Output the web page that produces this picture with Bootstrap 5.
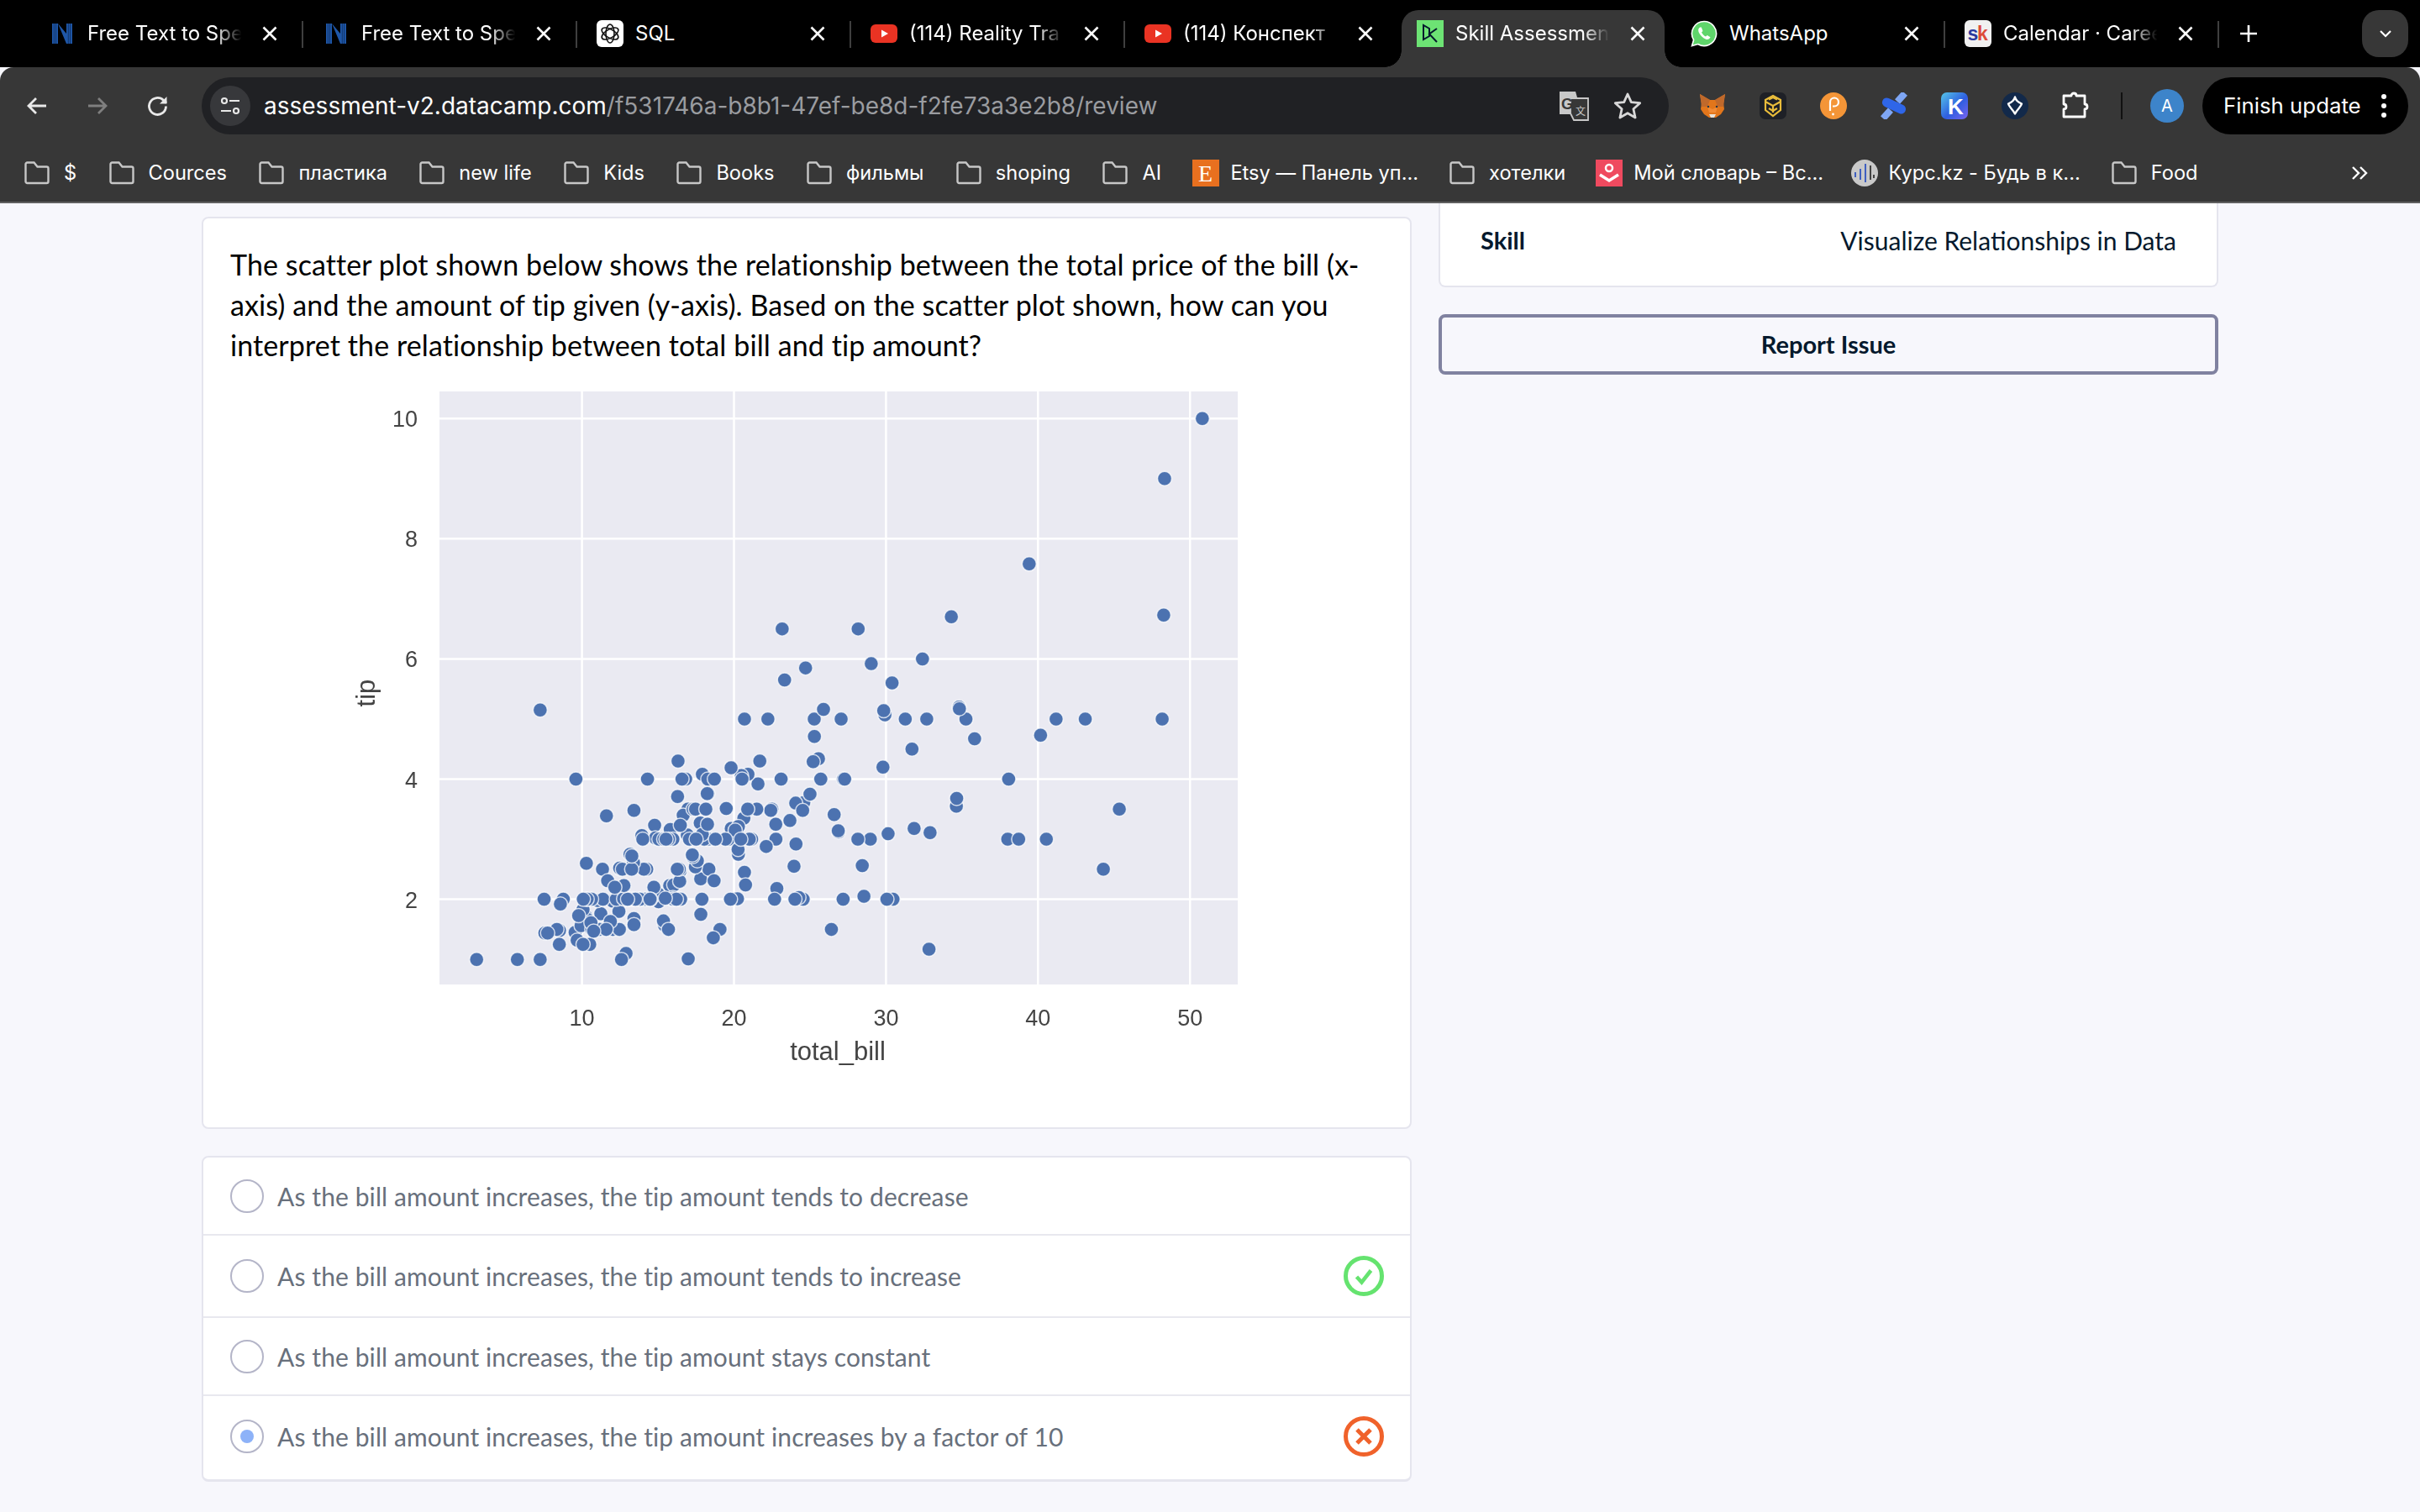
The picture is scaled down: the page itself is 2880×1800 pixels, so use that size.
<!DOCTYPE html>
<html lang="en">
<head>
    <meta charset="UTF-8">
    <title>Skill Assessment</title>
    <link href="https://cdn.jsdelivr.net/npm/bootstrap@5.3.0/dist/css/bootstrap.min.css" rel="stylesheet">
    <style>
        html, body { height: 1800px; overflow: hidden; }
        body { background: #f7f7fc; font-family: "Lato", "Liberation Sans", sans-serif; color: #05192d; }

        /* browser chrome */
        .chrome { font-family: "Inter", "Noto Sans", "Liberation Sans", sans-serif; color: #fff; }
        .strip { height: 80px; background: #000; padding-left: 35px; }
        .tab-item { width: 324px; height: 68px; margin-top: 12px; padding: 0 24px 12px 23px; font-size: 24px; }
        .tab-on { width: 313px; margin-left: 5px; margin-right: 8px; padding-left: 18px; padding-right: 18px; background: #373737; border-radius: 20px 20px 0 0; position: relative; }
        .tab-on::before, .tab-on::after { content: ""; position: absolute; bottom: 0; width: 20px; height: 20px; }
        .tab-on::before { left: -20px; background: radial-gradient(circle at 0 0, #000 19.5px, #373737 20px); }
        .tab-on::after { right: -20px; background: radial-gradient(circle at 100% 0, #000 19.5px, #373737 20px); }
        .fav { width: 32px; height: 32px; flex: none; display: block; }
        .tab-title { flex: 1 1 0; min-width: 0; margin: 0 8px 0 14px; white-space: nowrap; -webkit-mask-image: linear-gradient(90deg, #000 78%, transparent 94%); mask-image: linear-gradient(90deg, #000 78%, transparent 94%); }
        .tab-title-full { -webkit-mask-image: none; mask-image: none; }
        .tab-x { width: 28px; height: 28px; flex: none; }
        .tab-sep { width: 2px; height: 32px; margin-top: 25px; background: #3f3f3f; flex: none; }
        .tab-plus { width: 28px; height: 28px; margin-left: 21px; margin-top: 26px; flex: none; }
        .tab-menu { width: 55px; height: 56px; margin-top: 12px; margin-left: auto; margin-right: 14px; border-radius: 20px; background: #373737; }

        .toolbar { height: 92px; background: #373737; padding-left: 8px; border-radius: 16px 16px 0 0; }
        .tool-btn { width: 72px; height: 68px; flex: none; }
        .url-pill { width: 1746px; height: 68px; margin-left: 16px; margin-right: 16px; background: #202124; border-radius: 34px; padding-left: 10px; padding-right: 31px; }
        .site-info { width: 48px; height: 48px; border-radius: 50%; background: #37383b; flex: none; margin-right: 16px; }
        .url-text { font-size: 28px; color: #fff; white-space: nowrap; flex: 1 1 0; }
        .url-text span { color: #9a9ca0; }
        .translate-ic { margin-right: 28px; }
        .ext-sep { width: 2px; height: 32px; background: #111; margin: 0 51px 0 18px; flex: none; }
        .avatar { width: 40px; height: 40px; border-radius: 50%; background: #3d84ca; font-size: 20px; flex: none; margin-left: -18px; margin-right: 22px; }
        .finish-pill { width: 245px; height: 68px; background: #000; border-radius: 34px; padding-left: 25px; font-size: 25.8px; flex: none; white-space: nowrap; }
        .dots { width: 8px; margin-left: 23px; }

        .bookbar { height: 68px; background: #373737; padding-left: 28px; font-size: 23.6px; }
        .book-item { margin-right: 36px; white-space: nowrap; flex: none; }
        .book-item:nth-child(-n+9) { margin-right: 37.4px; }
        .book-item svg { margin-right: 16px; }
        .book-item.book-tight svg { margin-right: 13px; }
        .book-item.book-short { margin-right: 32.5px; }
        .book-more { margin-left: auto; margin-right: 60px; }
        .chrome-line { height: 2px; background: #606060; }

        /* page */
        .page-wrap { padding: 16px 240px 0; gap: 32px; }
        .left-col { width: 1440px; flex: none; }
        .right-col { width: 928px; flex: none; margin-top: -16px; }
        .panel { background: #fff; border: 2px solid #e5e5ee; border-radius: 8px; }
        .question-panel { height: 1086px; padding: 32px 32px 0 32px; }
        .question-text { font-size: 34px; line-height: 48px; color: #000; margin: -1px 0 0; letter-spacing: .1px; }
        .chart-svg { display: block; margin-top: 17px; filter: blur(.6px); }
        .chart-svg text { font-family: "Liberation Sans", Arial, sans-serif; fill: #444; }

        .options-panel { margin-top: 32px; border-bottom-width: 3px; }
        .option-row { min-height: 93px; padding: 24px 30px 24px 32px; border-bottom: 2px solid #e8e8ef; }
        .option-row:last-child { border-bottom: 0; padding-bottom: 27px; }
        .radio-ring { width: 40px; height: 40px; border: 2px solid #b4b5c8; border-radius: 50%; flex: none; margin-right: 16px; background: #fff; }
        .radio-dot { width: 16px; height: 16px; border-radius: 50%; background: #8db2f8; }
        .option-text { font-size: 30px; line-height: 38px; color: #68707c; flex: 1 1 0; letter-spacing: .1px; }
        .result-ic { width: 48px; height: 48px; flex: none; margin-right: 1px; }

        .skill-panel { height: 100px; border-top: 0; border-radius: 0 0 8px 8px; padding: 0 48px 10px 48px; font-size: 29px; }
        .skill-label { font-weight: 700; }
        .skill-value { font-size: 30px; }
        .report-btn { display: block; width: 100%; height: 72px; margin-top: 32px; background: transparent; border: 4px solid #8082a0; border-radius: 8px; font-size: 29px; font-weight: 700; color: #05192d; }
    </style>
</head>
<body>
    <svg width="0" height="0" class="position-absolute">
        <symbol id="ic-x" viewBox="0 0 28 28"><path d="M6.5 6.5l15 15M21.5 6.5l-15 15" stroke="#fff" stroke-width="2.6" fill="none"/></symbol>
        <symbol id="ic-n" viewBox="0 0 32 32">
            <path d="M4 4h7v24H4zM28 4h-7v24h7zM11 4l10 24V16L11 4z" fill="#1f57a8"/>
            <path d="M6.300 4v24M8.600 4v24M23.300 4v24M25.600 4v24" stroke="#0c2c5a" stroke-width=".8"/>
        </symbol>
        <symbol id="ic-yt" viewBox="0 0 32 32">
            <rect x="0" y="5" width="32" height="22" rx="6" fill="#ea3323"/>
            <path d="M13 11.500l8 4.500-8 4.500z" fill="#fff"/>
        </symbol>
        <symbol id="ic-folder" viewBox="0 0 32 32">
            <path d="M2.500 27V6.500a2 2 0 0 1 2-2h8l4 5h11a2 2 0 0 1 2 2V27a2 2 0 0 1-2 2h-23a2 2 0 0 1-2-2z" transform="translate(0 -1)" fill="none" stroke="#c7c7c7" stroke-width="2.400"/>
        </symbol>
    </svg>

    <div class="chrome">
        <div class="strip d-flex align-items-start">
            <div class="tab-item d-flex align-items-center"><svg class="fav"><use href="#ic-n"/></svg><span class="tab-title">Free Text to Spe</span><svg class="tab-x"><use href="#ic-x"/></svg></div>
            <div class="tab-sep"></div>
            <div class="tab-item d-flex align-items-center"><svg class="fav"><use href="#ic-n"/></svg><span class="tab-title">Free Text to Spe</span><svg class="tab-x"><use href="#ic-x"/></svg></div>
            <div class="tab-sep"></div>
            <div class="tab-item d-flex align-items-center">
                <svg class="fav" viewBox="0 0 32 32"><rect width="32" height="32" rx="6" fill="#fff"/><g fill="none" stroke="#111" stroke-width="1.600"><ellipse cx="16" cy="16" rx="5" ry="11"/><ellipse cx="16" cy="16" rx="5" ry="11" transform="rotate(60 16 16)"/><ellipse cx="16" cy="16" rx="5" ry="11" transform="rotate(120 16 16)"/></g></svg>
                <span class="tab-title tab-title-full">SQL</span><svg class="tab-x"><use href="#ic-x"/></svg>
            </div>
            <div class="tab-sep"></div>
            <div class="tab-item d-flex align-items-center"><svg class="fav"><use href="#ic-yt"/></svg><span class="tab-title">(114) Reality Tra</span><svg class="tab-x"><use href="#ic-x"/></svg></div>
            <div class="tab-sep"></div>
            <div class="tab-item d-flex align-items-center"><svg class="fav"><use href="#ic-yt"/></svg><span class="tab-title">(114) Конспект</span><svg class="tab-x"><use href="#ic-x"/></svg></div>
            <div class="tab-item tab-on d-flex align-items-center">
                <svg class="fav" viewBox="0 0 32 32"><rect width="32" height="32" fill="#6de374"/><path d="M8 6v17l7-4V10zM24 10L15 16.500 24 26" fill="none" stroke="#05192d" stroke-width="2"/></svg>
                <span class="tab-title">Skill Assessmen</span><svg class="tab-x"><use href="#ic-x"/></svg>
            </div>
            <div class="tab-item d-flex align-items-center">
                <svg class="fav" viewBox="0 0 32 32"><path d="M16 1.500A14.500 14.500 0 0 0 3.600 23.500L1.500 30.500l7.200-2A14.500 14.500 0 1 0 16 1.500z" fill="#5fd56b" stroke="#fff" stroke-width="1.600"/><path d="M11 8.500c-2 1.500-2.500 4-.8 7 1.800 3.200 4.500 6 8 7.200 2.500.8 4.500-.5 5.300-2.500l-3.800-2.200-1.700 1.600c-2-.8-4-3-5-5l1.500-1.700L12.800 8.500z" fill="#fff"/></svg>
                <span class="tab-title tab-title-full">WhatsApp</span><svg class="tab-x"><use href="#ic-x"/></svg>
            </div>
            <div class="tab-sep"></div>
            <div class="tab-item d-flex align-items-center">
                <svg class="fav" viewBox="0 0 32 32"><rect width="32" height="32" rx="6" fill="#f1f1f1"/><text x="3.500" y="24" font-family="Liberation Sans, sans-serif" font-weight="700" font-size="23" fill="#2b3a9e">s</text><text x="15" y="24" font-family="Liberation Sans, sans-serif" font-weight="700" font-size="23" fill="#dd4b39">k</text></svg>
                <span class="tab-title">Calendar · Caree</span><svg class="tab-x"><use href="#ic-x"/></svg>
            </div>
            <div class="tab-sep"></div>
            <svg class="tab-plus" viewBox="0 0 28 28"><path d="M14 4v20M4 14h20" stroke="#fff" stroke-width="2.600"/></svg>
            <div class="tab-menu d-flex align-items-center justify-content-center">
                <svg width="20" height="20" viewBox="0 0 20 20"><path d="M4 7l6 6 6-6" fill="none" stroke="#fff" stroke-width="2.200"/></svg>
            </div>
        </div>

        <div class="toolbar d-flex align-items-center">
            <div class="tool-btn d-flex align-items-center justify-content-center">
                <svg width="30" height="30" viewBox="0 0 30 30"><path d="M26 15H5M14 6l-9 9 9 9" fill="none" stroke="#e8e8e8" stroke-width="2.800"/></svg>
            </div>
            <div class="tool-btn d-flex align-items-center justify-content-center">
                <svg width="30" height="30" viewBox="0 0 30 30"><path d="M4 15h21M16 6l9 9-9 9" fill="none" stroke="#7f7f7f" stroke-width="2.800"/></svg>
            </div>
            <div class="tool-btn d-flex align-items-center justify-content-center">
                <svg width="30" height="30" viewBox="0 0 30 30"><path d="M24.500 15.500a10 10 0 1 1-3-7.200L25 11.500" fill="none" stroke="#e8e8e8" stroke-width="2.800"/><path d="M25.500 4v8.500H17z" fill="#e8e8e8"/></svg>
            </div>
            <div class="url-pill d-flex align-items-center">
                <div class="site-info d-flex align-items-center justify-content-center">
                    <svg width="28" height="28" viewBox="0 0 28 28"><g fill="none" stroke="#e8e8e8" stroke-width="2.200"><circle cx="7" cy="8" r="3"/><path d="M13 8h12M3 20h12"/><circle cx="21" cy="20" r="3"/></g></svg>
                </div>
                <div class="url-text">assessment-v2.datacamp.com<span>/f531746a-b8b1-47ef-be8d-f2fe73a3e2b8/review</span></div>
                <svg class="translate-ic" width="36" height="36" viewBox="0 0 36 36"><path d="M1 1h19l2 7v20H1z" fill="#c8c8c8"/><path d="M14 9h21v26H18l-4-8z" fill="#373737" stroke="#c8c8c8" stroke-width="1.800"/><text x="3" y="22" font-family="Liberation Sans, sans-serif" font-weight="700" font-size="18" fill="#373737">G</text><text x="20" y="29" font-family="Noto Sans CJK SC, sans-serif" font-size="12" fill="#c8c8c8">文</text></svg>
                <svg width="36" height="36" viewBox="0 0 36 36"><path d="M18 4l4.300 9.600 10.400 1.100-7.800 7 2.200 10.300L18 26.700 8.900 32l2.200-10.300-7.800-7 10.400-1.100z" fill="none" stroke="#d8d8d8" stroke-width="2.800" stroke-linejoin="round"/></svg>
            </div>
            <div class="tool-btn d-flex align-items-center justify-content-center">
                <svg width="32" height="32" viewBox="0 0 32 32"><path d="M1 2l12 7h6l12-7-2 11 1 7-4 6-6 4h-8l-6-4-4-6 1-7z" fill="#e2761b"/><path d="M1 2l12 7-3 8H3zM31 2L19 9l3 8h7z" fill="#c0692b"/><path d="M10 17l6 3 6-3-2 7h-8z" fill="#f08a35"/><path d="M12 26h8l-2 4h-4z" fill="#e8e2da"/><circle cx="11" cy="17" r="1.200" fill="#233447"/><circle cx="21" cy="17" r="1.200" fill="#233447"/></svg>
            </div>
            <div class="tool-btn d-flex align-items-center justify-content-center">
                <svg width="32" height="32" viewBox="0 0 32 32"><rect width="32" height="32" rx="7" fill="#1e2026"/><path d="M16 4l9 5v12l-9 7-9-7V9z" fill="none" stroke="#e9bc3b" stroke-width="2.200"/><path d="M7 11l9 5 9-5M16 16v8M11 8.500l5-2.500 5 2.500M11 19l5 3 5-3" fill="none" stroke="#e9bc3b" stroke-width="2.200"/></svg>
            </div>
            <div class="tool-btn d-flex align-items-center justify-content-center">
                <svg width="32" height="32" viewBox="0 0 32 32"><circle cx="16" cy="16" r="16" fill="#f49537"/><path d="M12 22V11.500a5 5 0 1 1 5 5h-2" fill="none" stroke="#fff" stroke-width="2.200"/><circle cx="15.500" cy="26" r="1.400" fill="#fff"/></svg>
            </div>
            <div class="tool-btn d-flex align-items-center justify-content-center">
                <svg width="32" height="32" viewBox="0 0 32 32"><path d="M20 11L29 1M3 31l9-10" stroke="#7ea6f4" stroke-width="8"/><rect x="1" y="10.500" width="30" height="11" rx="5.500" fill="#2f66e8" transform="rotate(25 16 16)"/></svg>
            </div>
            <div class="tool-btn d-flex align-items-center justify-content-center">
                <svg width="32" height="32" viewBox="0 0 32 32"><defs><linearGradient id="kgrad" x1="0" y1="0" x2="1" y2="1"><stop offset="0" stop-color="#55c6e8"/><stop offset=".55" stop-color="#2f5ee0"/><stop offset="1" stop-color="#7a63f0"/></linearGradient></defs><rect width="32" height="32" rx="7" fill="url(#kgrad)"/><text x="8" y="26" font-family="Liberation Sans, sans-serif" font-weight="700" font-size="26" fill="#fff">K</text></svg>
            </div>
            <div class="tool-btn d-flex align-items-center justify-content-center">
                <svg width="32" height="32" viewBox="0 0 32 32"><circle cx="16" cy="16" r="16" fill="#12294a"/><path d="M16 5c1 4 3 6 8 8-1 4-5 6-8 12-3-6-7-8-8-12 5-2 7-4 8-8z" transform="translate(0 .5)" fill="none" stroke="#fff" stroke-width="2.400" stroke-linejoin="round"/></svg>
            </div>
            <div class="tool-btn d-flex align-items-center justify-content-center">
                <svg width="34" height="34" viewBox="0 0 34 34"><path d="M3 5h9c0-4 6-4 6 0h10v10c4 0 4 6 0 6v9H3v-9c4 0 4-6 0-6z" fill="none" stroke="#fff" stroke-width="2.800" stroke-linejoin="round"/></svg>
            </div>
            <div class="ext-sep"></div>
            <div class="avatar d-flex align-items-center justify-content-center">A</div>
            <div class="finish-pill d-flex align-items-center">
                <span>Finish update</span>
                <svg class="dots" height="34" viewBox="0 0 8 34"><circle cx="4" cy="6" r="3" fill="#fff"/><circle cx="4" cy="17" r="3" fill="#fff"/><circle cx="4" cy="28" r="3" fill="#fff"/></svg>
            </div>
        </div>

        <div class="bookbar d-flex align-items-center">
            <div class="book-item d-flex align-items-center"><svg width="32" height="32"><use href="#ic-folder"/></svg>$</div>
            <div class="book-item d-flex align-items-center"><svg width="32" height="32"><use href="#ic-folder"/></svg>Cources</div>
            <div class="book-item d-flex align-items-center"><svg width="32" height="32"><use href="#ic-folder"/></svg>пластика</div>
            <div class="book-item d-flex align-items-center"><svg width="32" height="32"><use href="#ic-folder"/></svg>new life</div>
            <div class="book-item d-flex align-items-center"><svg width="32" height="32"><use href="#ic-folder"/></svg>Kids</div>
            <div class="book-item d-flex align-items-center"><svg width="32" height="32"><use href="#ic-folder"/></svg>Books</div>
            <div class="book-item d-flex align-items-center"><svg width="32" height="32"><use href="#ic-folder"/></svg>фильмы</div>
            <div class="book-item d-flex align-items-center"><svg width="32" height="32"><use href="#ic-folder"/></svg>shoping</div>
            <div class="book-item d-flex align-items-center"><svg width="32" height="32"><use href="#ic-folder"/></svg>AI</div>
            <div class="book-item book-tight d-flex align-items-center">
                <svg width="32" height="32" viewBox="0 0 32 32"><rect width="32" height="32" fill="#e8701f"/><text x="7" y="26" font-family="Liberation Serif, serif" font-size="28" fill="#fff">E</text></svg>Etsy — Панель уп...
            </div>
            <div class="book-item d-flex align-items-center"><svg width="32" height="32"><use href="#ic-folder"/></svg>хотелки</div>
            <div class="book-item book-tight book-short d-flex align-items-center">
                <svg width="32" height="32" viewBox="0 0 32 32"><rect width="32" height="32" fill="#ef4a5f"/><circle cx="16" cy="10" r="4" fill="none" stroke="#fff" stroke-width="2.500"/><path d="M5 18l11 7 11-7" fill="none" stroke="#fff" stroke-width="3.500"/></svg>Мой словарь – Вс...
            </div>
            <div class="book-item book-tight d-flex align-items-center">
                <svg width="32" height="32" viewBox="0 0 32 32"><circle cx="16" cy="16" r="16" fill="#c9c9c9"/><path d="M5 15v6M11 11v13M17 5v22" stroke="#3f5fc0" stroke-width="2"/><path d="M23 7v17M27 18v4" stroke="#444" stroke-width="2"/></svg>Курс.kz - Будь в к...
            </div>
            <div class="book-item d-flex align-items-center"><svg width="32" height="32"><use href="#ic-folder"/></svg>Food</div>
            <svg class="book-more" width="24" height="24" viewBox="0 0 24 24"><path d="M4 5l7 7-7 7M13 5l7 7-7 7" fill="none" stroke="#fff" stroke-width="2.400"/></svg>
        </div>
        <div class="chrome-line"></div>
    </div>

    <div class="page-wrap d-flex align-items-start">
        <div class="left-col">
            <div class="panel question-panel">
                <p class="question-text">The scatter plot shown below shows the relationship between the total price of the bill (x-<br>axis) and the amount of tip given (y-axis). Based on the scatter plot shown, how can you<br>interpret the relationship between total bill and tip amount?</p>
                <svg id="scatter" class="chart-svg" width="1300" height="830" viewBox="274 452 1300 830"></svg>
            </div>

            <div class="panel options-panel">
                <div class="option-row d-flex align-items-center">
                    <span class="radio-ring"></span><span class="option-text">As the bill amount increases, the tip amount tends to decrease</span>
                </div>
                <div class="option-row d-flex align-items-center">
                    <span class="radio-ring"></span><span class="option-text">As the bill amount increases, the tip amount tends to increase</span>
                    <svg class="result-ic" viewBox="0 0 48 48"><circle cx="24" cy="24" r="21.500" fill="none" stroke="#65e36f" stroke-width="5"/><path d="M15.500 25l6 6.500 11-14" fill="none" stroke="#65e36f" stroke-width="4.500"/></svg>
                </div>
                <div class="option-row d-flex align-items-center">
                    <span class="radio-ring"></span><span class="option-text">As the bill amount increases, the tip amount stays constant</span>
                </div>
                <div class="option-row d-flex align-items-center">
                    <span class="radio-ring d-flex align-items-center justify-content-center"><span class="radio-dot"></span></span><span class="option-text">As the bill amount increases, the tip amount increases by a factor of 10</span>
                    <svg class="result-ic" viewBox="0 0 48 48"><circle cx="24" cy="24" r="21.500" fill="none" stroke="#f0622b" stroke-width="5"/><path d="M16 16l16 16M32 16L16 32" stroke="#f0622b" stroke-width="5"/></svg>
                </div>
            </div>
        </div>

        <div class="right-col">
            <div class="panel skill-panel d-flex align-items-center justify-content-between">
                <span class="skill-label">Skill</span>
                <span class="skill-value">Visualize Relationships in Data</span>
            </div>
            <button class="report-btn" type="button">Report Issue</button>
        </div>
    </div>

    <script>
        // seaborn tips: total_bill, tip
        const tips = [16.99,1.01,10.34,1.66,21.01,3.5,23.68,3.31,24.59,3.61,25.29,4.71,8.77,2,26.88,3.12,15.04,1.96,14.78,3.23,10.27,1.71,35.26,5,15.42,1.57,18.43,3,14.83,3.02,21.58,3.92,10.33,1.67,16.29,3.71,16.97,3.5,20.65,3.35,17.92,4.08,20.29,2.75,15.77,2.23,39.42,7.58,19.82,3.18,17.81,2.34,13.37,2,12.69,2,21.7,4.3,19.65,3,9.55,1.45,18.35,2.5,15.06,3,20.69,2.45,17.78,3.27,24.06,3.6,16.31,2,16.93,3.07,18.69,2.31,31.27,5,16.04,2.24,17.46,2.54,13.94,3.06,9.68,1.32,30.4,5.6,18.29,3,22.23,5,32.4,6,28.55,2.05,18.04,3,12.54,2.5,10.29,2.6,34.81,5.2,9.94,1.56,25.56,4.34,19.49,3.51,38.01,3,26.41,1.5,11.24,1.76,48.27,6.73,20.29,3.21,13.81,2,11.02,1.98,18.29,3.76,17.59,2.64,20.08,3.15,16.45,2.47,3.07,1,20.23,2.01,15.01,2.09,12.02,1.97,17.07,3,26.86,3.14,25.28,5,14.73,2.2,10.51,1.25,17.92,3.08,27.2,4,22.76,3,17.29,2.71,19.44,3,16.66,3.4,10.07,1.83,32.68,5,15.98,2.03,34.83,5.17,13.03,2,18.28,4,24.71,5.85,21.16,3,28.97,3,22.49,3.5,5.75,1,16.32,4.3,22.75,3.25,40.17,4.73,27.28,4,12.03,1.5,21.01,3,12.46,1.5,11.35,2.5,15.38,3,44.3,2.5,22.42,3.48,20.92,4.08,15.36,1.64,20.49,4.06,25.21,4.29,18.24,3.76,14.31,4,14,3,7.25,1,38.07,4,23.95,2.55,25.71,4,17.31,3.5,29.93,5.07,10.65,1.5,12.43,1.8,24.08,2.92,11.69,2.31,13.42,1.68,14.26,2.5,15.95,2,12.48,2.52,29.8,4.2,8.52,1.48,14.52,2,11.38,2,22.82,2.18,19.08,1.5,20.27,2.83,11.17,1.5,12.26,2,18.26,3.25,8.51,1.25,10.33,2,14.15,2,16,2,13.16,2.75,17.47,3.5,34.3,6.7,41.19,5,27.05,5,16.43,2.3,8.35,1.5,18.64,1.36,11.87,1.63,9.78,1.73,7.51,2,14.07,2.5,13.13,2,17.26,2.74,24.55,2,19.77,2,29.85,5.14,48.17,5,25,3.75,13.39,2.61,16.49,2,21.5,3.5,12.66,2.5,16.21,2,13.81,2,17.51,3,24.52,3.48,20.76,2.24,31.71,4.5,10.59,1.61,10.63,2,50.81,10,15.81,3.16,7.25,5.15,31.85,3.18,16.82,4,32.9,3.11,17.89,2,14.48,2,9.6,4,34.63,3.55,34.65,3.68,23.33,5.65,45.35,3.5,23.17,6.5,40.55,3,20.69,5,20.9,3.5,30.46,2,18.15,3.5,23.1,4,15.69,1.5,19.81,4.19,28.44,2.56,15.48,2.02,16.58,4,7.56,1.44,10.34,2,43.11,5,13,2,13.51,2,18.71,4,12.74,2.01,13,2,16.4,2.5,20.53,4,16.47,3.23,26.59,3.41,38.73,3,24.27,2.03,12.76,2.23,30.06,2,25.89,5.16,48.33,9,13.27,2.5,28.17,6.5,12.9,1.1,28.15,3,11.59,1.5,7.74,1.44,30.14,3.09,12.16,2.2,13.42,3.48,8.58,1.92,15.98,3,13.42,1.58,16.27,2.5,10.09,2,20.45,3,13.28,2.72,22.12,2.88,24.01,2,15.69,3,11.61,3.39,10.77,1.47,15.53,3,10.07,1.25,12.6,1,32.83,1.17,35.83,4.67,29.03,5.92,27.18,2,22.67,2,17.82,1.75,18.78,3];

        const px = v => 692.6 + (v - 10) * 18.09;
        const py = v => 1070.6 - (v - 2) * 71.55;
        let out = '<rect x="523" y="466" width="950" height="706" fill="#eaeaf2"/>';

        [10, 20, 30, 40, 50].forEach(t => {
            out += `<line x1="${px(t)}" x2="${px(t)}" y1="466" y2="1172" stroke="#fff" stroke-width="2.500"/>`;
            out += `<text x="${px(t)}" y="1221" text-anchor="middle" font-size="27">${t}</text>`;
        });
        [2, 4, 6, 8, 10].forEach(t => {
            out += `<line x1="523" x2="1473" y1="${py(t)}" y2="${py(t)}" stroke="#fff" stroke-width="2.500"/>`;
            out += `<text x="497" y="${py(t) + 10}" text-anchor="end" font-size="27">${t}</text>`;
        });
        out += '<text x="997" y="1262" text-anchor="middle" font-size="31">total_bill</text>';
        out += '<text transform="translate(446 825) rotate(-90)" text-anchor="middle" font-size="31">tip</text>';

        for (let i = 0; i < tips.length; i += 2) {
            out += `<circle cx="${px(tips[i])}" cy="${py(tips[i + 1])}" r="8.5" fill="#4c72b0" stroke="#fff" stroke-opacity=".75" stroke-width="1.500"/>`;
        }
        document.getElementById('scatter').innerHTML = out;
    </script>
    <script src="https://cdn.jsdelivr.net/npm/bootstrap@5.3.0/dist/js/bootstrap.bundle.min.js"></script>
</body>
</html>
